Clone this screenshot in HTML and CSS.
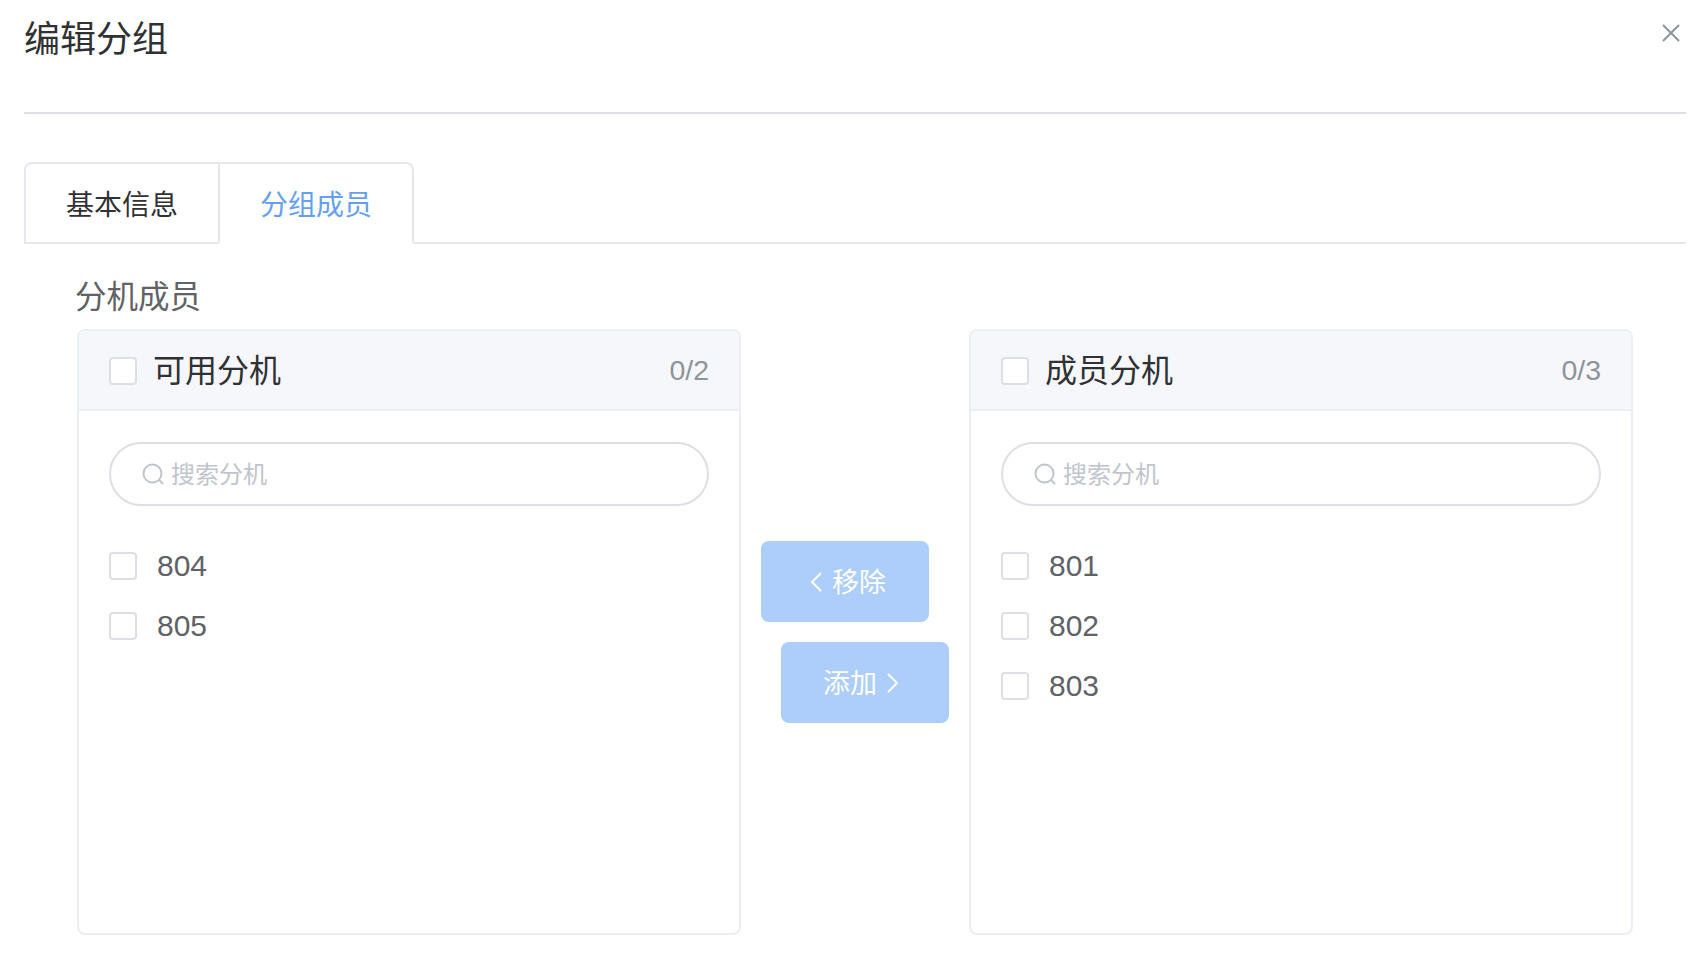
FILE: index.html
```html
<!DOCTYPE html>
<html lang="zh-CN">
<head>
<meta charset="utf-8">
<title>编辑分组</title>
<link rel="stylesheet" href="styles.css">
</head>
<body>
<div class="dialog">
  <header class="dialog-header">
    <h1 class="dialog-title">编辑分组</h1>
    <svg class="close" viewBox="0 0 18 18" width="18" height="18"><path d="M1 1L17 17M17 1L1 17"/></svg>
  </header>
  <nav class="tabs">
    <div class="tab">基本信息</div>
    <div class="tab tab-active">分组成员</div>
  </nav>
  <section class="form-item">
    <div class="form-label">分机成员</div>
    <div class="transfer">
      <div class="panel">
        <div class="panel-head">
          <span class="check"></span>
          <span class="panel-title">可用分机</span>
          <span class="count">0/2</span>
        </div>
        <div class="panel-body">
          <div class="search">
            <svg class="search-icon" viewBox="0 0 22 22" width="22" height="22"><circle cx="10.5" cy="10.5" r="9"/><path d="M17 17L21 21"/></svg>
            <span class="placeholder">搜索分机</span>
          </div>
          <ul class="list">
            <li class="item"><span class="check"></span><span class="item-label">804</span></li>
            <li class="item"><span class="check"></span><span class="item-label">805</span></li>
          </ul>
        </div>
      </div>
      <div class="actions">
        <button class="btn btn-remove"><svg class="chev" viewBox="0 0 12 20" width="12" height="20"><path d="M11 1L2 10L11 19"/></svg><span>移除</span></button>
        <button class="btn btn-add"><span>添加</span><svg class="chev" viewBox="0 0 12 20" width="12" height="20"><path d="M1 1L10 10L1 19"/></svg></button>
      </div>
      <div class="panel">
        <div class="panel-head">
          <span class="check"></span>
          <span class="panel-title">成员分机</span>
          <span class="count">0/3</span>
        </div>
        <div class="panel-body">
          <div class="search">
            <svg class="search-icon" viewBox="0 0 22 22" width="22" height="22"><circle cx="10.5" cy="10.5" r="9"/><path d="M17 17L21 21"/></svg>
            <span class="placeholder">搜索分机</span>
          </div>
          <ul class="list">
            <li class="item"><span class="check"></span><span class="item-label">801</span></li>
            <li class="item"><span class="check"></span><span class="item-label">802</span></li>
            <li class="item"><span class="check"></span><span class="item-label">803</span></li>
          </ul>
        </div>
      </div>
    </div>
  </section>
</div>
</body>
</html>
```
FILE: styles.css
```css
* { box-sizing: border-box; }
html, body { margin: 0; padding: 0; background: #fff; }
body {
  width: 1690px;
  height: 970px;
  overflow: hidden;
  font-family: "Liberation Sans", "Noto Sans CJK SC", sans-serif;
  color: #606266;
}
.dialog { margin-left: 24px; width: 1662px; }

.dialog-header {
  position: relative;
  height: 114px;
  border-bottom: 2px solid #dcdfe6;
  padding-top: 16px;
}
.dialog-title {
  margin: 0;
  font-size: 36px;
  line-height: 48px;
  font-weight: 400;
  color: #303133;
}
.close {
  position: absolute;
  right: 6px;
  top: 24px;
  fill: none;
  stroke: #909399;
  stroke-width: 2;
}

.tabs {
  display: flex;
  margin-top: 48px;
  height: 82px;
  border-bottom: 2px solid #e4e7ed;
}
.tab {
  width: 196px;
  height: 82px;
  display: flex;
  align-items: center;
  justify-content: center;
  font-size: 28px;
  color: #303133;
  border: 2px solid #e4e7ed;
  border-radius: 8px 0 0 0;
}
.tab-active {
  margin-left: -2px;
  color: #659fee;
  border-bottom-color: #fff;
  border-radius: 0 8px 0 0;
}

.form-item { padding-left: 53px; }
.form-label {
  height: 85px;
  padding-top: 37px;
  font-size: 31.5px;
  line-height: 33px;
  color: #606266;
  margin-left: -2px;
}
.transfer { display: flex; align-items: center; }

.panel {
  width: 664px;
  height: 606px;
  border: 2px solid #ebeef5;
  border-radius: 8px;
  overflow: hidden;
}
.panel-head {
  display: flex;
  align-items: center;
  height: 80px;
  padding: 0 30px;
  background: #f5f7fa;
  border-bottom: 2px solid #ebeef5;
}
.panel-head .check { margin-top: 2px; }
.panel-title {
  margin-left: 16px;
  padding-bottom: 4px;
  font-size: 32px;
  color: #303133;
  flex: 1;
}
.count { font-size: 28.5px; color: #909399; }
.check {
  flex: none;
  display: block;
  width: 28px;
  height: 28px;
  background: #fff;
  border: 2px solid #dcdfe6;
  border-radius: 4px;
}

.panel-body { padding: 31px 30px 0; }
.search {
  display: flex;
  align-items: center;
  height: 64px;
  padding-left: 31px;
  border: 2px solid #dcdfe6;
  border-radius: 32px;
}
.search-icon {
  flex: none;
  fill: none;
  stroke: #c0c4cc;
  stroke-width: 2;
}
.placeholder {
  margin-left: 7px;
  padding-bottom: 4px;
  font-size: 24px;
  color: #c0c4cc;
}
.list { list-style: none; margin: 30px 0 0; padding: 0; }
.item { display: flex; align-items: center; height: 60px; }
.item-label { margin-left: 20px; font-size: 30px; color: #606266; }

.actions {
  flex: none;
  width: 228px;
  padding-left: 20px;
  display: flex;
  flex-direction: column;
  align-items: flex-start;
  gap: 20px;
}
.btn {
  display: flex;
  align-items: center;
  gap: 10px;
  width: 168px;
  height: 81px;
  margin: 0;
  border: 0;
  border-radius: 8px;
  background: #adcdfa;
  color: #fff;
  font-family: inherit;
  font-size: 27px;
}
.btn span { padding-bottom: 2px; }
.btn-remove { padding: 0 0 0 49px; }
.btn-add { padding: 0 0 0 42px; margin-left: 20px; }
.chev { flex: none; fill: none; stroke: #fff; stroke-width: 2; }
```
